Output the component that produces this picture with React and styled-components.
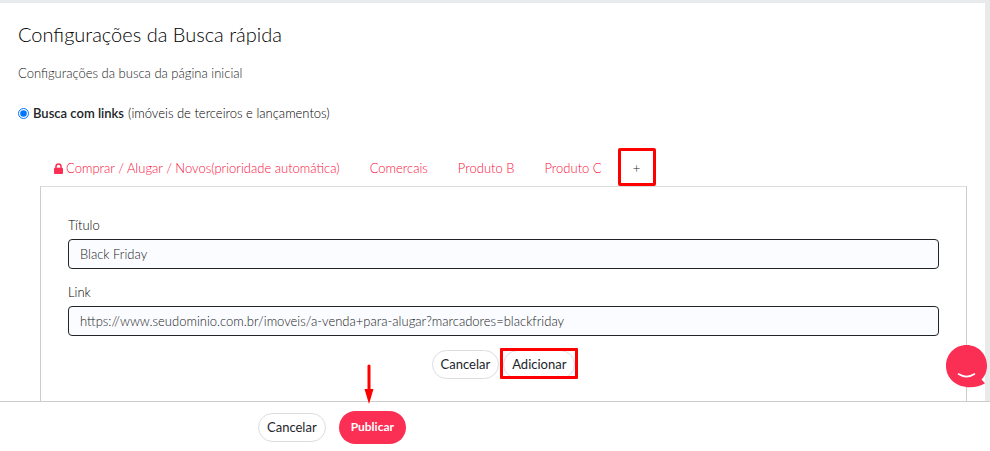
import React, { useState } from "react";
import styled, { createGlobalStyle, css } from "styled-components";

const GlobalStyle = createGlobalStyle`
  * {
    box-sizing: border-box;
  }
  body {
    margin: 0;
    background: #e9eaec;
    color: #000;
    font-family: Lato, "Open Sans", sans-serif;
    font-size: 13px;
    font-weight: 300;
    line-height: 20px;
  }
  button,
  input {
    font: inherit;
  }
`;

const StyledWrapper = styled.div`
  display: flex;
  flex-direction: column;
  min-height: 100vh;
`;
const StyledContent = styled.main`
  flex: 1;
  display: flex;
  flex-direction: column;
  margin: 3px 5px 0 0;
  padding: 15px 18px 0;
  background: #fff;
`;
const StyledTitle = styled.h1`
  margin: 0;
  font-size: 20px;
  font-weight: 300;
  line-height: 32px;
`;
const StyledDescription = styled.p`
  margin: 13px 0 20px;
  color: #222;
`;
const StyledRadioLabel = styled.label`
  display: flex;
  align-items: center;
  gap: 4px;
  input {
    width: 11px;
    height: 11px;
    margin: 0;
    accent-color: #0075ff;
  }
  strong {
    color: #212529;
    font-weight: 600;
  }
`;
const StyledTabs = styled.div`
  display: flex;
  gap: 2px;
  margin: 25px 22px 0;
`;
const StyledTab = styled.button`
  display: flex;
  align-items: center;
  gap: 3px;
  height: 38px;
  padding: 2px 14px 0;
  border: 0;
  background: #fff;
  color: #fa0f3c;
  cursor: pointer;
  ${({ $highlighted }) =>
    $highlighted &&
    css`
      justify-content: center;
      width: 38px;
      padding: 2px 0 0;
      border: 3px solid #ff0000;
      border-radius: 2px;
      color: #222;
    `}
`;
const StyledPanel = styled.form`
  flex: 1;
  margin-left: 22px;
  padding: 28px 27px 20px;
  border: 1px solid #ccc;
  border-top-color: #ddd;
  border-bottom: 0;
`;
const StyledField = styled.label`
  display: block;
  margin-bottom: 13px;
`;
const StyledInput = styled.input`
  display: block;
  width: 100%;
  height: 30px;
  margin-top: 4px;
  padding: 0 11px;
  border: 1px solid #212529;
  border-radius: 4px;
  background: #fafcff;
  color: #222;
`;
const StyledActions = styled.div`
  display: flex;
  justify-content: center;
  gap: 4px;
  margin-top: 14px;
`;
const StyledButton = styled.button`
  height: 29px;
  padding: 0 8px 2px;
  border: 1px solid #ddd;
  border-radius: 15px;
  background: #fff;
  color: #212529;
  font-weight: 400;
  cursor: pointer;
  ${({ $primary }) =>
    $primary &&
    css`
      height: 33px;
      padding: 0 12px 2px;
      border: 0;
      border-radius: 17px;
      background: #fb2e54;
      color: #fff;
      font-size: 12px;
      font-weight: 700;
    `}
`;
const StyledMarked = styled.div`
  position: relative;
  &::after {
    content: "";
    position: absolute;
    inset: -2px -3px 0;
    border: 3px solid #ff0000;
    border-radius: 1px;
    pointer-events: none;
  }
`;
const StyledFooter = styled.footer`
  display: flex;
  align-items: center;
  gap: 13px;
  height: 50px;
  padding: 2px 0 0 258px;
  border-top: 1px solid #ccc;
  background: #fff;
`;
const StyledPointed = styled.div`
  position: relative;
  svg {
    position: absolute;
    left: 25px;
    bottom: 40px;
  }
`;
const StyledChat = styled.button`
  position: fixed;
  right: 2px;
  bottom: 63px;
  width: 42px;
  height: 43px;
  padding: 0;
  border: 0;
  background: none;
  cursor: pointer;
  svg {
    display: block;
  }
`;

const tabs = ["Comercais", "Produto B", "Produto C"];

const LockIcon = () => (
  <svg width="9" height="11" viewBox="0 0 9 11" aria-hidden="true">
    <path d="M2 5V3.4a2.5 2.5 0 0 1 5 0V5" fill="none" stroke="#fb2e54" strokeWidth="1.5" />
    <rect y="4.7" width="9" height="6.3" rx="0.9" fill="#fb2e54" />
  </svg>
);

const App = () => {
  const [title, setTitle] = useState("Black Friday");
  const [link, setLink] = useState(
    "https://www.seudominio.com.br/imoveis/a-venda+para-alugar?marcadores=blackfriday"
  );

  return (
    <StyledWrapper>
      <GlobalStyle />
      <StyledContent>
        <StyledTitle>Configurações da Busca rápida</StyledTitle>
        <StyledDescription>
          Configurações da busca da página inicial
        </StyledDescription>
        <StyledRadioLabel>
          <input type="radio" name="search" defaultChecked />
          <strong>Busca com links</strong>
          <span>(imóveis de terceiros e lançamentos)</span>
        </StyledRadioLabel>

        <StyledTabs>
          <StyledTab type="button">
            <LockIcon />
            Comprar / Alugar / Novos(prioridade automática)
          </StyledTab>
          {tabs.map((tab) => (
            <StyledTab type="button" key={tab}>
              {tab}
            </StyledTab>
          ))}
          <StyledTab type="button" $highlighted>
            +
          </StyledTab>
        </StyledTabs>

        <StyledPanel onSubmit={(e) => e.preventDefault()}>
          <StyledField>
            Título
            <StyledInput
              type="text"
              value={title}
              onChange={(e) => setTitle(e.target.value)}
            />
          </StyledField>
          <StyledField>
            Link
            <StyledInput
              type="text"
              value={link}
              onChange={(e) => setLink(e.target.value)}
            />
          </StyledField>
          <StyledActions>
            <StyledButton type="button">Cancelar</StyledButton>
            <StyledMarked>
              <StyledButton type="submit">Adicionar</StyledButton>
            </StyledMarked>
          </StyledActions>
        </StyledPanel>
      </StyledContent>

      <StyledFooter>
        <StyledButton type="button">Cancelar</StyledButton>
        <StyledPointed>
          <StyledButton type="button" $primary>
            Publicar
          </StyledButton>
          <svg width="10" height="40" viewBox="0 0 10 40" aria-hidden="true">
            <path d="M3.5 1.5Q5-.5 6.5 1.5V25H9.5L5 40 .5 25h3z" fill="#ff0000" />
          </svg>
        </StyledPointed>
      </StyledFooter>

      <StyledChat type="button" aria-label="Chat">
        <svg width="42" height="43" viewBox="0 0 42 43">
          <path
            d="M20.5 0C32 0 41 9 41 20.5c0 5-1.500 10-5.500 14l3.500 3.800c-4 2.700-9.500 4-15 4C10 42.300 0 33 0 21 0 9 9 0 20.500 0z"
            fill="#fb2e54"
          />
          <path
            d="M12.500 29c5 3.300 11 3.300 16 0"
            fill="none"
            stroke="#fff"
            strokeWidth="1.600"
            strokeLinecap="round"
          />
        </svg>
      </StyledChat>
    </StyledWrapper>
  );
};

export default App;
